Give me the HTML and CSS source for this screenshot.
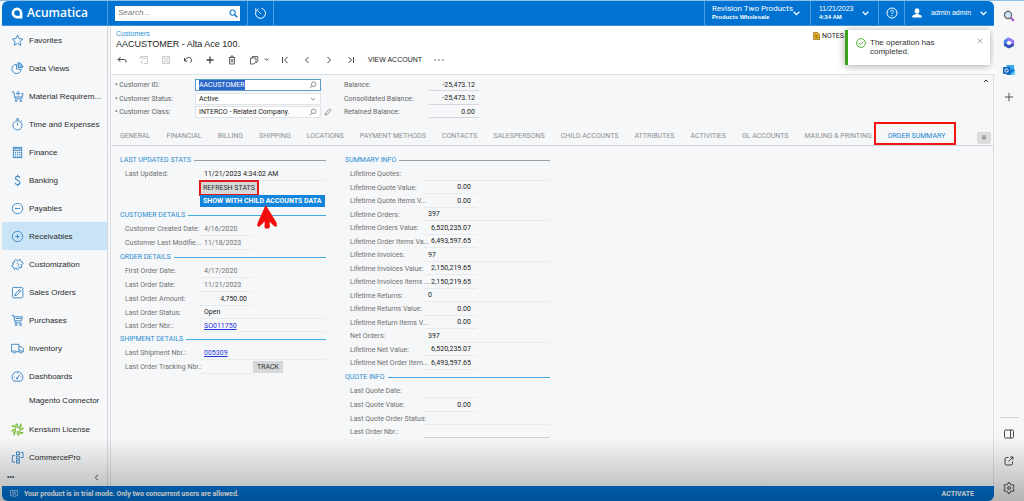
FILE: index.html
```html
<!DOCTYPE html>
<html lang="en">
<head>
<meta charset="utf-8">
<title>Acumatica - Customers</title>
<link rel="stylesheet" href="styles.css">
</head>
<body>
<div class="window">
  <div class="app">
    <header class="topbar">
      <div class="brand">
        <svg width="12" height="12" viewBox="0 0 12 12"><path fill="#fff" fill-rule="evenodd" d="M6 .6A5.4 5.4 0 0 0 6 11.400H11.400V6A5.400 5.400 0 0 0 6 .6ZM6 3.300A2.800 2.800 0 0 1 8.800 6V8.800H6A2.750 2.750 0 0 1 6 3.300Z"/></svg>
        <span>Acumatica</span>
      </div>
      <div class="search-cell">
        <div class="search">
          <input type="search" placeholder="Search..." aria-label="Search">
          <svg width="9" height="9" viewBox="0 0 9 9" fill="none" stroke="#1c7fd0"><circle cx="3.600" cy="3.600" r="2.600" stroke-width="1.100"/><path d="M5.600 5.600L8.300 8.300" stroke-width="1.500"/></svg>
        </div>
      </div>
      <button class="top-cell history" aria-label="Recent"><svg width="13" height="13" viewBox="0 0 13 13" fill="none" stroke="#fff"><path d="M7.500 1.400A5 5 0 1 1 2 4.200M4.500 1.600L2 4.200L1.600 1.500M4.300 4.200L6.700 6.800"/></svg></button>
      <div class="spacer"></div>
      <button class="top-cell company"><span class="two-line"><span>Revision Two Products</span><small>Products Wholesale</small></span><svg width="7" height="5" viewBox="0 0 7 5"><path class="chev" d="M.7 .8L3.500 3.600L6.300 .8"/></svg></button>
      <button class="top-cell date"><span class="two-line"><span class="day">11/21/2023</span><small>4:34 AM</small></span><svg width="7" height="5" viewBox="0 0 7 5"><path class="chev" d="M.7 .8L3.500 3.600L6.300 .8"/></svg></button>
      <button class="top-cell help" aria-label="Help"><svg width="12" height="12" viewBox="0 0 12 12" fill="none" stroke="#fff"><circle cx="6" cy="6" r="5"/><path d="M4.500 4.800C4.500 2.800 7.600 2.900 7.500 4.700C7.400 5.600 6 5.700 6 7M6 8V9"/></svg></button>
      <button class="top-cell user"><svg width="10" height="10" viewBox="0 0 10 10" fill="#fff"><ellipse cx="5" cy="3" rx="2.300" ry="2.800"/><path d="M.3 9.500V8.200C1 6.800 3 6.600 3.800 6H6.200C7 6.600 9 6.800 9.700 8.200V9.500Z"/></svg><span>admin admin</span><svg width="7" height="5" viewBox="0 0 7 5"><path class="chev" d="M.7 .8L3.500 3.600L6.300 .8"/></svg></button>
    </header>

    <div class="body">
      <nav class="menu">
        <a href="#"><svg viewBox="0 0 14 14"><path d="M7 1.200L8.700 5L12.600 5.400L9.700 8.100L10.500 12.200L7 10.100L3.500 12.200L4.300 8.100L1.400 5.400L5.300 5Z"/></svg><span>Favorites</span></a>
        <a href="#"><svg viewBox="0 0 14 14"><path d="M6 2.500A5 5 0 1 0 11 8L6 7.500Z"/><path fill="#8cc4ee" d="M7.700 .8V5.800H12.700A5 5 0 0 0 7.700 .8Z"/></svg><span>Data Views</span></a>
        <a href="#"><svg viewBox="0 0 14 14"><path d="M.8 2H3L4.500 9.500H11.500L13 4H11M4 7.500H11.800M7.600 1V6M5.300 3.600H9.900"/><circle cx="5.500" cy="11.700" r=".9"/><circle cx="10.500" cy="11.700" r=".9"/></svg><span>Material Requirem...</span></a>
        <a href="#"><svg viewBox="0 0 14 14"><circle cx="7" cy="7.900" r="4.900"/><path d="M5.300 1H8.700M7 1V3M7 5V8M11 3L12 4"/></svg><span>Time and Expenses</span></a>
        <a href="#"><svg viewBox="0 0 14 14"><rect x="2.500" y="1.500" width="9" height="11"/><path d="M4 3H10V5H4ZM4 7H5.500M6.400 7H7.900M8.800 7H10.300M4 9H5.500M6.400 9H7.900M8.800 9H10.300M4 11H5.500M6.400 11H7.900M8.800 11H10.300"/></svg><span>Finance</span></a>
        <a href="#"><svg viewBox="0 0 14 14"><path stroke-width="1.200" d="M9.500 4C9 1.900 4.700 2 4.800 4.500C4.900 7.200 9.700 6.200 9.600 9.300C9.500 11.900 4.800 11.900 4.400 9.400M7.100 .8V2.500M7.100 11.300V13.200"/></svg><span>Banking</span></a>
        <a href="#"><svg viewBox="0 0 14 14"><circle cx="7" cy="7" r="5.600"/><path d="M4.300 7H9.700"/></svg><span>Payables</span></a>
        <a href="#" class="active" aria-current="page"><svg viewBox="0 0 14 14"><circle cx="7" cy="7" r="5.600"/><path d="M4.700 7H9.300M7 4.700V9.300"/></svg><span>Receivables</span></a>
        <a href="#"><svg viewBox="0 0 14 14"><path d="M1.600 5.200L4.200 4.300C2.700 1.700 6.200 .6 6.900 3.400L9.800 1.300L11 4.300C13.600 3.500 13.600 7.300 10.900 7.100L11.600 10.200L8.700 10C8.900 13 5.400 13.400 5.600 10.600L3.400 12.600L2.600 9.700C.2 9.900 .3 6.900 2.500 7.300ZM6 5.500C8 5 9 8 7 8.700"/></svg><span>Customization</span></a>
        <a href="#"><svg viewBox="0 0 14 14"><rect x="1.500" y="1.500" width="11.300" height="11.300" rx="1.500"/><path d="M4 10.500L4.600 8.300L9.200 3.700L10.700 5.200L6.100 9.800ZM8.200 4.800L9.600 6.200"/></svg><span>Sales Orders</span></a>
        <a href="#"><svg viewBox="0 0 14 14"><path d="M.8 1.500H2.800L4.500 9.500H11.300M3.200 3H12.300L11.300 7.300H4.200M5 4.800H11.500"/><circle cx="5.500" cy="11.500" r="1"/><circle cx="10.300" cy="11.500" r="1"/></svg><span>Purchases</span></a>
        <a href="#"><svg viewBox="0 0 14 14"><path d="M2.200 10.500H.6V2.500H8.500V10.500H5M8.500 5H11.500L13.400 7.300V10.500H12M9.300 10.500H8.500"/><circle cx="3.600" cy="10.500" r="1.400"/><circle cx="10.700" cy="10.500" r="1.400"/></svg><span>Inventory</span></a>
        <a href="#"><svg viewBox="0 0 14 14"><path d="M3.200 12A5.800 5.800 0 1 1 10.800 12ZM6.500 9L9.600 4.800M3 7.500H4M7 3V4M10.300 7.500H11.300"/><circle cx="6.500" cy="9" r=".8"/></svg><span>Dashboards</span></a>
        <a href="#" class="plain"><span>Magento Connector</span></a>
        <a href="#"><svg class="kensium" viewBox="0 0 14 14"><path d="M5 .7L7.200 3V5.300M10.500 .8V3.800L8.700 5.600M13.300 5.200L11.200 6.800H8.900M13.200 10.700H10.300L8.500 8.800M8.900 13.400L7.100 11.300V9M3.500 13.200V10.300L5.300 8.600M.8 9L3 7.100H5.300M.8 3.400H3.800L5.500 5.200"/></svg><span>Kensium License</span></a>
        <a href="#"><svg viewBox="0 0 14 14"><rect x="6" y="1" width="3" height="3"/><rect x="6" y="5.500" width="3" height="3"/><rect x="6" y="10" width="3" height="3"/><path d="M10.500 1.500H13V7H10.500M4.500 5H1.500V12H4.500"/></svg><span>CommercePro</span></a>
        <div class="menu-foot"><button aria-label="More items">•••</button><button aria-label="Collapse menu"><svg width="5" height="7" viewBox="0 0 5 7" fill="none" stroke="#555"><path d="M4 .8L1.200 3.500L4 6.200"/></svg></button></div>
      </nav>

      <main class="main">
        <div class="page-head">
          <div class="titles">
            <a href="#">Customers</a>
            <h1>AACUSTOMER - Alta Ace 100.</h1>
          </div>
          <button class="notes"><svg width="7" height="8" viewBox="0 0 7 8"><path fill="#e8b020" stroke="#8a6a1c" stroke-width=".7" d="M.5 .5H4.500L6.500 2.500V7.500H.5Z"/><path stroke="#6b5210" stroke-width=".7" d="M2 3.500H5M2 5.500H5"/></svg>NOTES</button>
        </div>
        <div class="toolbar">
          <button aria-label="Back"><svg viewBox="0 0 10 10"><path d="M3.500 2L1 4.500L3.500 7M1 4.500H7.500Q9 4.500 9 6V7.500"/></svg></button>
          <button aria-label="Save and close" disabled><svg viewBox="0 0 10 10"><path d="M1.500 4V1.500H8.500V8.500H5M3 1.500V3.500H7V1.500M4 5.500L1.500 7L4 8.500"/></svg></button>
          <button aria-label="Save" disabled><svg viewBox="0 0 10 10"><path d="M1.500 1.500H8.500V8.500H1.500ZM3 1.500V4H7V1.500M3 8.500V6H7V8.500"/></svg></button>
          <button aria-label="Undo"><svg viewBox="0 0 10 10"><path d="M1.500 3V6H4.500M1.500 6C3 1.500 9 1.500 8.600 6L7.500 7.500"/></svg></button>
          <button aria-label="Add"><svg viewBox="0 0 10 10"><path stroke-width="1.300" d="M5 1.500V8.500M1.500 5H8.500"/></svg></button>
          <button aria-label="Delete"><svg viewBox="0 0 10 10"><path stroke-width=".8" d="M1.800 2.500H8.200M3.800 2.300V1H6.200V2.300M2.600 2.500V9H7.400V2.500M4.200 4V7.500M5.800 4V7.500"/></svg></button>
          <button class="copy" aria-label="Copy"><svg viewBox="0 0 10 10"><path stroke-width=".8" d="M3.200 3V1.500H8.800V6L7 8M1.500 3H7V7L5 9H1.500Z"/></svg><svg class="mini" viewBox="0 0 5 5"><path d="M.8 1.500L2.500 3.300L4.200 1.500"/></svg></button>
          <button aria-label="First"><svg viewBox="0 0 10 10"><path d="M2.500 2V8M7.500 2L4.500 5L7.500 8"/></svg></button>
          <button aria-label="Previous"><svg viewBox="0 0 10 10"><path d="M6.500 2L3.500 5L6.500 8"/></svg></button>
          <button aria-label="Next"><svg viewBox="0 0 10 10"><path d="M3.500 2L6.500 5L3.500 8"/></svg></button>
          <button aria-label="Last"><svg viewBox="0 0 10 10"><path d="M2.500 2L5.500 5L2.500 8M7.500 2V8"/></svg></button>
          <button class="text-btn">VIEW ACCOUNT</button>
          <button aria-label="More"><svg viewBox="0 0 10 10"><path d="M.5 5H2M4.200 5H5.700M8 5H9.500"/></svg></button>
        </div>

        <div class="panel">
          <form class="summary">
            <div class="keys">
              <label class="key"><span><b>•</b> Customer ID:</span><span class="box focus"><input id="cust" value="AACUSTOMER"><svg viewBox="0 0 8 8"><circle cx="4.700" cy="3.300" r="2.300"/><path d="M3 5L.8 7.300"/></svg></span></label>
              <label class="key"><span><b>•</b> Customer Status:</span><span class="box"><select><option>Active</option></select><svg viewBox="0 0 8 8"><path d="M2 3L4 5L6 3"/></svg></span></label>
              <label class="key"><span><b>•</b> Customer Class:</span><span class="box"><input value="INTERCO - Related Company."><svg viewBox="0 0 8 8"><circle cx="4.700" cy="3.300" r="2.300"/><path d="M3 5L.8 7.300"/></svg></span><svg class="pencil" viewBox="0 0 8 8"><path d="M1 7L1.500 5L5.700 .9L7.100 2.300L3 6.500Z"/></svg></label>
            </div>
            <div class="balances">
              <label><span>Balance:</span><input readonly value="-25,473.12"></label>
              <label><span>Consolidated Balance:</span><input readonly value="-25,473.12"></label>
              <label><span>Retained Balance:</span><input readonly value="0.00"></label>
            </div>
            <button type="button" class="fold" aria-label="Collapse summary"><svg width="6" height="4" viewBox="0 0 6 4" fill="none" stroke="#333"><path d="M1 3L3 1L5 3"/></svg></button>
          </form>

          <div class="tabs">
            <button>GENERAL</button><button>FINANCIAL</button><button>BILLING</button><button>SHIPPING</button><button>LOCATIONS</button><button>PAYMENT METHODS</button><button>CONTACTS</button><button>SALESPERSONS</button><button>CHILD ACCOUNTS</button><button>ATTRIBUTES</button><button>ACTIVITIES</button><button>GL ACCOUNTS</button><button>MAILING &amp; PRINTING</button><button class="current">ORDER SUMMARY</button>
            <button class="tab-menu" aria-label="All tabs"><svg width="6" height="6" viewBox="0 0 6 6" fill="none" stroke="#777" stroke-width=".8"><path d="M1 1H5M1.200 2.500L3 5L4.800 2.500Z"/></svg></button>
          </div>

          <div class="columns">
            <div class="col left">
              <h2 class="gray">LAST UPDATED STATS</h2>
              <label class="row"><span>Last Updated:</span><input class="dark" readonly value="11/21/2023 4:34:02 AM"></label>
              <div class="action"><button class="refresh">REFRESH STATS</button></div>
              <div class="action"><button class="primary">SHOW WITH CHILD ACCOUNTS DATA</button>
                <svg class="pointer" viewBox="0 0 20 24"><path fill="#f20d0d" d="M8.700 0L19.500 17.500L20 21.500L17.500 21.500L12.500 16.500L13 22L11.500 23.500H8L7.500 22L7.700 16.500L2 22L0 20.500L1 17Z"/></svg></div>
              <h2>CUSTOMER DETAILS</h2>
              <label class="row"><span>Customer Created Date:</span><input class="short" readonly value="4/16/2020"></label>
              <label class="row"><span>Customer Last Modifie...</span><input class="short" readonly value="11/18/2023"></label>
              <h2>ORDER DETAILS</h2>
              <label class="row"><span>First Order Date:</span><input class="short" readonly value="4/17/2020"></label>
              <label class="row"><span>Last Order Date:</span><input class="short" readonly value="11/21/2023"></label>
              <label class="row"><span>Last Order Amount:</span><input class="short num" readonly value="4,750.00"></label>
              <label class="row tight"><span>Last Order Status:</span><input class="dark" readonly value="Open"></label>
              <div class="row tight"><span>Last Order Nbr.:</span><div class="link"><a href="#">SO011750</a></div></div>
              <h2>SHIPMENT DETAILS</h2>
              <div class="row"><span>Last Shipment Nbr.:</span><div class="link"><a href="#">005309</a></div></div>
              <div class="row"><label for="track">Last Order Tracking Nbr.:</label><input id="track" class="short" readonly><button class="track">TRACK</button></div>
            </div>

            <div class="col right">
              <h2 class="gray">SUMMARY INFO</h2>
              <div class="stats">
                <label class="row"><span>Lifetime Quotes:</span><input class="dark" readonly></label>
                <label class="row"><span>Lifetime Quote Value:</span><input class="short num" readonly value="0.00"></label>
                <label class="row"><span>Lifetime Quote Items V...</span><input class="short num" readonly value="0.00"></label>
                <label class="row"><span>Lifetime Orders:</span><input class="dark" readonly value="397"></label>
                <label class="row"><span>Lifetime Orders Value:</span><input class="short num" readonly value="6,520,235.07"></label>
                <label class="row"><span>Lifetime Order Items Va...</span><input class="short num" readonly value="6,493,597.65"></label>
                <label class="row"><span>Lifetime Invoices:</span><input class="dark" readonly value="97"></label>
                <label class="row"><span>Lifetime Invoices Value:</span><input class="short num" readonly value="2,150,219.65"></label>
                <label class="row"><span>Lifetime Invoices Items ...</span><input class="short num" readonly value="2,150,219.65"></label>
                <label class="row"><span>Lifetime Returns:</span><input class="dark" readonly value="0"></label>
                <label class="row"><span>Lifetime Returns Value:</span><input class="short num" readonly value="0.00"></label>
                <label class="row"><span>Lifetime Return Items V...</span><input class="short num" readonly value="0.00"></label>
                <label class="row"><span>Net Orders:</span><input class="dark" readonly value="397"></label>
                <label class="row"><span>Lifetime Net Value:</span><input class="short num" readonly value="6,520,235.07"></label>
                <label class="row"><span>Lifetime Net Order Item...</span><input class="short num" readonly value="6,493,597.65"></label>
              </div>
              <h2>QUOTE INFO</h2>
              <label class="row"><span>Last Quote Date:</span><input class="short" readonly></label>
              <label class="row"><span>Last Quote Value:</span><input class="short num" readonly value="0.00"></label>
              <label class="row tight"><span>Last Quote Order Status:</span><input readonly></label>
              <label class="row tight"><span>Last Order Nbr.:</span><input class="strong-line" readonly></label>
            </div>
          </div>
        </div>
      </main>
    </div>

    <footer class="status">
      <svg width="8" height="8" viewBox="0 0 8 8" fill="none" stroke="#b8d8f4" stroke-width=".8"><path d="M.5 .5H7.500V5.800H5.500L4.300 7.300L4 5.800H.5ZM2 2.300H6M2 4H6"/></svg>
      <span>Your product is in trial mode. Only two concurrent users are allowed.</span>
      <button>ACTIVATE</button>
    </footer>

    <div class="toast" role="status">
      <svg width="10" height="10" viewBox="0 0 10 10" fill="none" stroke="#4fae35"><circle cx="5" cy="5" r="4.400"/><path d="M2.800 5L4.400 6.600L7.300 3.700"/></svg>
      <p>The operation has completed.</p>
      <button aria-label="Close"><svg width="6" height="6" viewBox="0 0 6 6" stroke="#999" stroke-width=".8"><path d="M.5 .5L5.500 5.500M5.500 .5L.5 5.500"/></svg></button>
    </div>
  </div>

  <aside class="dock">
    <button aria-label="Search"><svg viewBox="0 0 12 12" fill="none"><circle cx="5" cy="5" r="3.600" fill="#cfe3f5" stroke="#666" stroke-width="1.200"/><path d="M7.800 7.800L10.800 10.800" stroke="#a34fc0" stroke-width="2"/></svg></button>
    <button aria-label="Microsoft 365"><svg viewBox="0 0 12 12" fill="none" stroke-width="3" stroke-linejoin="round" stroke-linecap="round"><path stroke="#4a7fe8" d="M5 2.200L2.300 4.200V7.500"/><path stroke="#9a7af0" d="M5.500 2.200H6.500L9.700 4.200V7"/><path stroke="#3550b8" d="M2.600 8L6 9.800L9.500 8"/></svg></button>
    <button aria-label="Outlook"><svg viewBox="0 0 12 12"><path fill="#35a8ea" d="M3.500 1H11V6H3.500Z"/><path fill="#1677cf" d="M3.500 5.500L12 5.500V11H3.500Z"/><path fill="#62c8f5" d="M7 11L12 6V11Z"/><rect y="3" width="7" height="7" rx="1" fill="#0f63b8"/><circle cx="3.500" cy="6.500" r="1.700" fill="none" stroke="#fff"/></svg></button>
    <button aria-label="Customize"><svg viewBox="0 0 12 12" stroke="#555"><path d="M6 1.800V10.200M1.800 6H10.200"/></svg></button>
    <div class="spacer"></div>
    <hr>
    <button aria-label="Sidebar"><svg viewBox="0 0 12 12" fill="none" stroke="#444"><rect x="1.500" y="2" width="9" height="8" rx="1.300"/><path d="M7.500 2V10"/></svg></button>
    <button aria-label="Open in new window"><svg viewBox="0 0 12 12" fill="none" stroke="#444"><path d="M5.500 2.500H3.500Q2 2.500 2 4V8.500Q2 10 3.500 10H8Q9.500 10 9.500 8.500V6.500M5.500 6.500L10 2M7.200 2H10V4.800"/></svg></button>
    <button aria-label="Settings"><svg viewBox="0 0 12 12" fill="none" stroke="#444"><path d="M5 .8H7L7.400 2.400L8.600 3.100L10.200 2.600L11.200 4.400L10 5.500V6.500L11.200 7.600L10.200 9.400L8.600 8.900L7.400 9.600L7 11.200H5L4.600 9.600L3.400 8.900L1.800 9.400L.8 7.600L2 6.500V5.500L.8 4.400L1.800 2.600L3.400 3.100L4.600 2.400Z"/><circle cx="6" cy="6" r="1.400"/></svg></button>
  </aside>
  <div class="shade"></div>
</div>
<script src="script.js"></script>
</body>
</html>
```
FILE: script.js
```js
document.getElementById("cust").select();
```
FILE: styles.css
```css
* { box-sizing: border-box; }
html, body { height: 100%; }
body {
  margin: 0;
  overflow: hidden;
  background: #edf1f4;
  color: #333;
  font: 7px/10px "Roboto", "Liberation Sans", sans-serif;
}
button, input, select { margin: 0; padding: 0; border: 0; background: none; font: inherit; color: inherit; outline: none; border-radius: 0; }
input { min-width: 0; }
a { color: inherit; text-decoration: none; }
svg { display: block; flex: none; }

.window { position: relative; display: flex; min-height: 100%; padding: 1px 0 0 2px; background: linear-gradient(#8dc0ea 1px, #f7f7f7 1px); }
.app { position: relative; flex: 1; display: flex; flex-direction: column; border-radius: 6px; overflow: hidden; min-width: 0; }
.spacer { flex: 1; }

/* Top bar */
.topbar { display: flex; height: 25px; background: #0072d1; border-bottom: 1px solid #3a93dc; color: #fff; font-family: "Liberation Sans", sans-serif; }
.brand { display: flex; align-items: center; gap: 4px; width: 106px; padding-left: 9px; border-right: 1px solid #4f9fe0; font: 600 12px/16px "Open Sans", sans-serif; }
.search-cell { display: flex; align-items: center; width: 140px; padding: 0 8px 0 7px; border-right: 1px solid #4f9fe0; }
.search { display: flex; align-items: center; width: 125px; height: 15px; padding: 0 2px 0 3px; background: #fff; }
.search input { flex: 1; color: #555; font: italic 8px/12px "Liberation Sans", sans-serif; appearance: none; }
.search input::placeholder { color: #757575; }
.top-cell { display: flex; align-items: center; border-right: 1px solid #4f9fe0; text-align: left; }
.history { width: 26px; justify-content: center; }
.company { width: 107px; padding: 0 11px 0 7px; justify-content: space-between; border-left: 1px solid #4f9fe0; font-family: "Roboto", sans-serif; font-size: 8px; }
.company small { font-family: "Liberation Sans", sans-serif; }
.date { width: 68px; padding: 0 9px 0 8px; justify-content: space-between; }
.day { font-size: 7px; }
.help { width: 26px; justify-content: center; }
.user { width: 89px; padding: 0 7px; gap: 7px; border-right: 0; font-size: 7px; justify-content: space-between; }
.two-line { display: flex; flex-direction: column; line-height: 8px; white-space: nowrap; }
.two-line small { font-size: 6px; line-height: 8px; font-weight: bold; }
.chev { fill: none; stroke: #fff; stroke-width: 1.3; }

.body { display: flex; flex: 1; }

/* Side menu */
.menu { display: flex; flex-direction: column; width: 106px; background: #f5f7f9; border-right: 1px solid #d4d8dc; color: #2b2b2b; font: 8px/10px "Liberation Sans", sans-serif; }
.menu a { display: flex; align-items: center; gap: 5px; height: 28px; padding-left: 9px; white-space: nowrap; }
.menu a span { padding-top: 1px; }
.menu a svg { width: 13px; height: 13px; fill: none; stroke: #3b86c4; }
.menu a .kensium { stroke: #7cc03c; stroke-width: 1.8; }
.menu .active { background: #c9e3f7; }
.menu .plain { height: 25px; padding: 0 0 4px 27px; }
.menu-foot { display: flex; justify-content: space-between; align-items: center; padding: 0 8px 0 5px; height: 12px; color: #555; font-size: 7px; }

/* Page header */
.main { flex: 1; min-width: 0; display: flex; flex-direction: column; margin-left: 2px; background: #fff; border-left: 1px solid #dcdfe3; }
.page-head { display: flex; justify-content: space-between; padding: 3px 150px 0 5px; }
.titles a { display: block; color: #2b8fd8; font: 7px/9px "Liberation Sans", sans-serif; }
h1 { margin: 0; font: 9px/12px "Liberation Sans", sans-serif; color: #222; }
.notes { display: flex; align-items: center; gap: 2px; height: 14px; font-size: 7px; color: #222; }
.toolbar { display: flex; align-items: center; height: 24px; padding-bottom: 5px; color: #222; }
.toolbar button { width: 22px; height: 19px; display: flex; align-items: center; justify-content: center; }
.toolbar svg { width: 10px; height: 10px; fill: none; stroke: #444; }
.toolbar button:disabled svg { stroke: #ccc; }
.toolbar .copy { width: 31px; gap: 5px; }
.toolbar .mini { width: 5px; height: 5px; }
.toolbar .text-btn { width: auto; padding: 0 6px; font: 7px/10px "Liberation Sans", sans-serif; }

/* Summary form */
.panel { flex: 1; background: #f5f7f9; border-top: 1px solid #dcdfe3; border-right: 1px solid #dcdfe3; }
.summary { display: flex; height: 48px; padding: 3px 4px 0; }
.keys, .balances { display: grid; grid-auto-rows: 14px 13px; color: #666; }
.keys { width: 229px; }
.key { display: flex; align-items: center; }
.key > span:first-child { width: 80px; }
.key b { font-size: 7px; }
.box { display: flex; align-items: center; width: 126px; height: 12px; padding: 0 3px; background: #fff; border: 1px solid #dfe2e6; color: #222; }
.box.focus { border-color: #5b9cc4; }
.box input, .box select { flex: 1; appearance: none; }
.box svg, .pencil { width: 8px; height: 8px; fill: none; stroke: #777; stroke-width: .8; }
.pencil { margin-left: 3px; }
#cust::selection { background: #2a66c8; color: #fff; }
.balances label { display: flex; align-items: center; }
.balances span { width: 85px; }
.balances input { width: 50px; height: 12px; padding-right: 4px; text-align: right; color: #222; border-bottom: 1px solid #d4d8dc; }
.fold { margin-left: auto; align-self: flex-start; height: 6px; }

/* Tabs */
.tabs { display: flex; align-items: stretch; height: 23px; padding: 0 2px 0 9px; gap: 16px; border-bottom: 1px solid #d4d8dc; color: #8c8f92; white-space: nowrap; }
.tabs button { padding-top: 4px; }
.tabs .current { position: relative; color: #1d84cf; }
.tabs .current::after { content: ""; position: absolute; inset: -1px -11px 0 -14px; border: 2px solid #f01414; }
.tabs .tab-menu { display: flex; align-items: center; justify-content: center; width: 14px; height: 12px; padding: 0; margin: 9px 0 0 auto; background: #dadcde; }

/* Detail columns */
.columns { display: flex; gap: 19px; padding: 7px 9px 0; }
.col { display: flex; flex-direction: column; }
.left { width: 206px; }
.right { width: 205px; }
h2 { display: flex; align-items: center; gap: 3px; height: 14px; margin: 0; color: #2b8cd0; font-size: 7px; font-weight: 400; line-height: 10px; white-space: nowrap; }
h2::after { content: ""; flex: 1; height: 1px; background: #45aade; }
h2.gray::after { background: #98a0a6; }
.row { display: flex; align-items: center; height: 14px; padding-left: 5px; color: #707070; white-space: nowrap; }
.tight { height: 13px; }
.row > span, .row > label { width: 75px; }
.right .row > span { width: 74px; }
.row input, .row .link { flex: 1; height: 100%; padding: 0 4px; border-bottom: 1px solid #e9ecee; }
.row .short { flex: none; width: 53px; }
.row .dark { color: #222; }
.row .num { padding-right: 6px; color: #222; text-align: right; }
.row .strong-line { border-color: #ccd0d3; }
.link a { display: block; padding-top: 2px; color: #1f36d8; text-decoration: underline; }
.action { position: relative; height: 14px; padding-left: 80px; }
.action + .action { height: 13px; }
.action button { display: block; height: 12px; padding: 0 3px; color: #333; white-space: nowrap; }
.action .refresh { height: 14px; background: #d6d8da; outline: 2px solid #e61919; outline-offset: -1px; }
.action .primary { background: #1184dc; color: #fff; font-weight: 700; }
.pointer { position: absolute; left: 137px; top: 10px; width: 20px; height: 24px; }
.track { width: 30px; height: 12px; background: #d6d8da; color: #333; }
.stats { display: grid; grid-auto-rows: 14px 13px; }
.stats .row { height: auto; }

/* Status bar */
.status { display: flex; align-items: center; gap: 6px; height: 15px; padding: 0 20px 0 8px; background: #0072d1; color: #fff; font-weight: 700; }
.status button { margin-left: auto; }

/* Notification */
.toast { position: absolute; top: 29px; right: 4px; display: flex; align-items: flex-start; width: 145px; height: 35px; padding: 8px 7px 0 8px; gap: 4px; background: #fff; border-left: 3px solid #3ba21d; box-shadow: 0 1px 8px rgba(0, 0, 0, .35); font: 8px/9px "Liberation Sans", sans-serif; color: #333; }
.toast p { margin: 0; width: 68px; }
.toast button { margin-left: auto; height: 6px; }

/* Browser dock */
.dock { display: flex; flex-direction: column; align-items: center; width: 30px; padding: 1px 0 0; background: #f7f7f7; }
.dock button { height: 27px; display: flex; align-items: center; }
.dock svg { width: 12px; height: 12px; }
.dock hr { width: 19px; margin: 0 0 2px; border: 0; border-top: 1px solid #d0d0d0; }

.shade { position: absolute; inset: auto 0 0 0; height: 64px; pointer-events: none; background: linear-gradient(rgba(0, 0, 0, 0), rgba(0, 0, 0, .27)); }
```
